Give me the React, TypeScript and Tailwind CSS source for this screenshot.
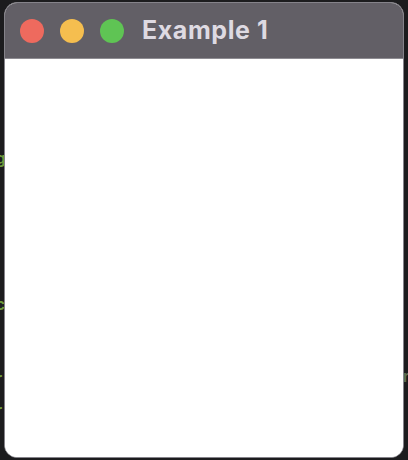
export default function App() {
  return (
    <div className="relative h-[460px] w-[408px] overflow-hidden bg-[#1c1c1e] font-['Inter','Liberation_Sans',sans-serif]">
      <div className="absolute left-[-4px] top-0 text-[15px] font-bold text-[#6f9b3c]">
        <span className="absolute top-[148px]">g</span>
        <span className="absolute top-[294px]">c</span>
        <span className="absolute top-[368px]">r</span>
        <span className="absolute top-[400px]">r</span>
      </div>
      <span className="absolute left-[403px] top-[366px] text-[15px] font-bold text-[#5d6b4e]">r</span>
      <div className="relative ml-[4px] mt-[2px] flex h-[456px] w-[400px] flex-col overflow-hidden rounded-[13px] border border-[#85838a] bg-white">
        <div className="flex h-[56px] shrink-0 items-center gap-4 border-b border-[#8e8c92] bg-[#625f66] pl-[15px]">
          <div className="h-6 w-6 rounded-full bg-[#ee6a5e]" />
          <div className="h-6 w-6 rounded-full bg-[#f5be4f]" />
          <div className="h-6 w-6 rounded-full bg-[#5fc454]" />
          <span className="ml-[2px] text-[25px] font-bold tracking-[0.6px] text-[#dedae2]">
            Example 1
          </span>
        </div>
        <div className="flex-1 bg-white" />
      </div>
    </div>
  );
}
